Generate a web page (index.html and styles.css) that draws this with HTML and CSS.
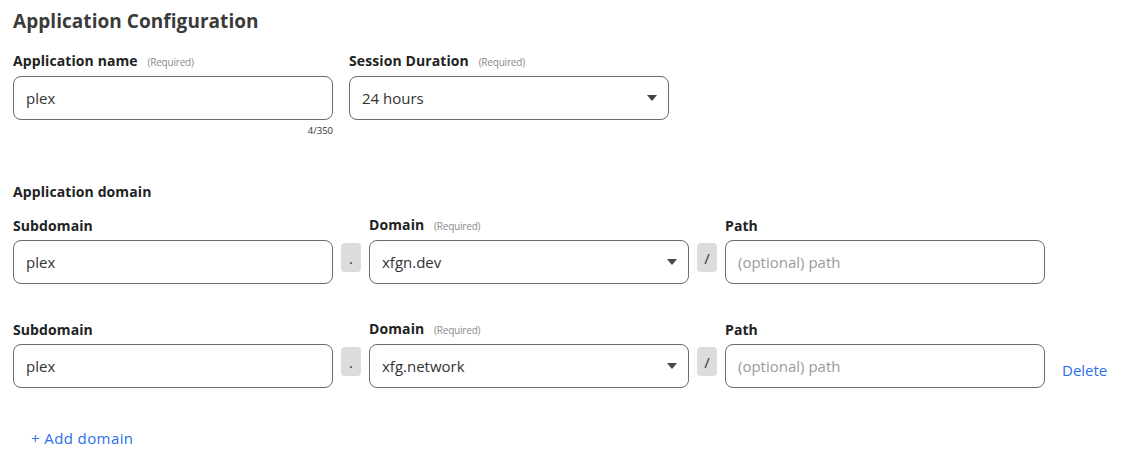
FILE: index.html
```html
<!DOCTYPE html>
<html>
<head>
<meta charset="utf-8">
<link rel="stylesheet" href="styles.css">
</head>
<body>
<div class="page">
  <h1 class="title">Application Configuration</h1>
  <div class="top-row">
    <div class="field">
      <div class="label">Application name <span class="req">(Required)</span></div>
      <div class="input"><span class="value">plex</span></div>
      <div class="counter">4/350</div>
    </div>
    <div class="field">
      <div class="label">Session Duration <span class="req">(Required)</span></div>
      <div class="input select"><span class="value">24 hours</span><span class="caret"></span></div>
    </div>
  </div>

  <div class="section-label">Application domain</div>

  <div class="domain-row">
    <div class="field">
      <div class="label">Subdomain</div>
      <div class="input"><span class="value">plex</span></div>
    </div>
    <div class="sep">.</div>
    <div class="field">
      <div class="label">Domain <span class="req">(Required)</span></div>
      <div class="input select"><span class="value">xfgn.dev</span><span class="caret"></span></div>
    </div>
    <div class="sep">/</div>
    <div class="field">
      <div class="label">Path</div>
      <div class="input"><span class="placeholder">(optional) path</span></div>
    </div>
  </div>

  <div class="domain-row second">
    <div class="field">
      <div class="label">Subdomain</div>
      <div class="input"><span class="value">plex</span></div>
    </div>
    <div class="sep">.</div>
    <div class="field">
      <div class="label">Domain <span class="req">(Required)</span></div>
      <div class="input select"><span class="value">xfg.network</span><span class="caret"></span></div>
    </div>
    <div class="sep">/</div>
    <div class="field">
      <div class="label">Path</div>
      <div class="input"><span class="placeholder">(optional) path</span></div>
    </div>
    <a class="link delete">Delete</a>
  </div>

  <a class="link add">+ Add domain</a>
</div>
</body>
</html>
```

FILE: styles.css
```css
* { box-sizing: border-box; }
html, body { margin: 0; padding: 0; background: #fff; }
body {
  font-family: "Open Sans", "Noto Sans", "Liberation Sans", sans-serif;
  color: #333;
}
.page {
  padding: 7px 13px 0 13px;
}
.title {
  margin: 0;
  font-size: 19px;
  line-height: 28px;
  font-weight: 700;
  color: #3a3a3a;
  letter-spacing: 0.05px;
}
.top-row {
  display: flex;
  gap: 16px;
  margin-top: 16px;
}
.field {
  width: 320px;
  display: flex;
  flex-direction: column;
}
.label {
  font-size: 14px;
  line-height: 20px;
  font-weight: 700;
  color: #222;
  margin-bottom: 4px;
  letter-spacing: 0.1px;
  white-space: nowrap;
}
.req {
  font-size: 10px;
  font-weight: 400;
  color: #8a8a8a;
  margin-left: 6px;
  letter-spacing: -0.2px;
}
.input {
  height: 44px;
  border: 1px solid #6b6b6b;
  border-radius: 8px;
  display: flex;
  align-items: center;
  padding: 0 11px 0 12px;
  font-size: 15px;
  background: #fff;
}
.value { color: #333; }
.placeholder { color: #9a9a9a; }
.select { justify-content: space-between; }
.caret {
  width: 0;
  height: 0;
  border-left: 5px solid transparent;
  border-right: 5px solid transparent;
  border-top: 6px solid #444;
}
.counter {
  font-size: 9.5px;
  line-height: 14px;
  margin-top: 4px;
  text-align: right;
  color: #333;
}
.section-label {
  margin-top: 44px;
  font-size: 14px;
  line-height: 20px;
  font-weight: 700;
  color: #222;
  letter-spacing: 0.1px;
}
.domain-row {
  display: flex;
  align-items: flex-end;
  margin-top: 13px;
}
.domain-row.second {
  margin-top: 35px;
}
.sep {
  width: 20px;
  height: 29px;
  margin: 0 8px 12px 8px;
  background: #dcdcdc;
  border-radius: 4px;
  display: flex;
  align-items: center;
  justify-content: center;
  font-size: 15px;
  color: #333;
}
.link {
  color: #2a6fe8;
  font-size: 15px;
  line-height: 20px;
  cursor: pointer;
}
.delete {
  margin: 0 0 8px 17px;
}
.add {
  display: inline-block;
  margin: 40px 0 0 18px;
  letter-spacing: 0.4px;
}
```
